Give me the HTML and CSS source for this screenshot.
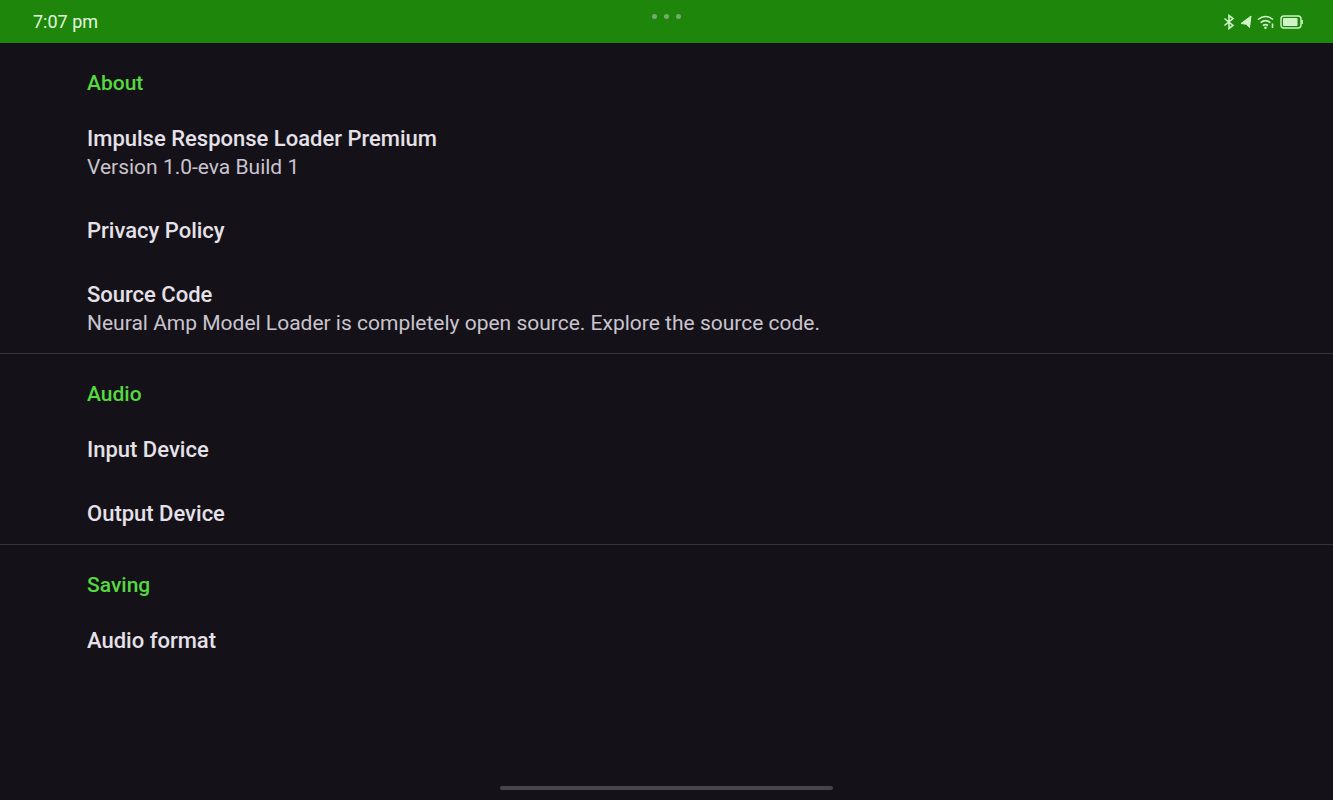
FILE: index.html
```html
<!DOCTYPE html>
<html lang="en">
<head>
  <meta charset="UTF-8" />
  <meta name="viewport" content="width=device-width, initial-scale=1.0"/>
  <title>Settings</title>
  <link rel="stylesheet" href="styles.css">
</head>
<body>
  <header class="status-bar">
    <time class="clock">7:07 pm</time>
    <div class="dots"><span></span><span></span><span></span></div>
    <div class="status-icons">
      <svg width="12" height="16" viewBox="0 0 12 16" fill="none" stroke="currentColor" stroke-width="1.6"><path d="M1.500 4.500l8.500 7L6 14.500V1.500l4 3-8.500 7"/></svg>
      <svg width="12" height="16" viewBox="0 0 12 16" fill="currentColor" stroke="currentColor" stroke-linejoin="round"><path d="M11 2L9.500 13.500 6.200 10.200 1 9.500z"/></svg>
      <svg width="18" height="16" viewBox="0 0 18 16" fill="none" stroke="currentColor" stroke-width="1.600"><path d="M1 5.500q7.500-6 15 0M3.600 8.700q4.900-4 9.800 0M6 11.500q2.500-1.800 5 0"/><circle cx="8.500" cy="13.800" r="1.300" fill="currentColor" stroke="none"/><path d="M15.500 9.500v4.500"/></svg>
      <svg width="23" height="16" viewBox="0 0 23 16" fill="none" stroke="currentColor" stroke-width="1.400"><rect x="1" y="2" width="20" height="12" rx="3"/><rect x="3" y="4" width="14.500" height="8" rx="1" fill="currentColor" stroke="none"/><path d="M22.200 6v4"/></svg>
    </div>
  </header>

  <main class="settings">
    <section class="category">
      <h2>About</h2>
      <div class="pref">
        <h3>Impulse Response Loader Premium</h3>
        <p>Version 1.0-eva Build 1</p>
      </div>
      <a class="pref" href="#privacy"><h3>Privacy Policy</h3></a>
      <a class="pref" href="#source">
        <h3>Source Code</h3>
        <p>Neural Amp Model Loader is completely open source. Explore the source code.</p>
      </a>
    </section>
    <section class="category">
      <h2>Audio</h2>
      <button class="pref" type="button">Input Device</button>
      <button class="pref" type="button">Output Device</button>
    </section>
    <section class="category">
      <h2>Saving</h2>
      <button class="pref" type="button">Audio format</button>
    </section>
  </main>

  <footer class="nav-bar"><div class="nav-handle"></div></footer>
</body>
</html>
```
FILE: styles.css
```css
* {
  box-sizing: border-box;
}
body {
  margin: 0;
  min-height: 100vh;
  display: flex;
  flex-direction: column;
  font-family: Roboto, sans-serif;
  color: #e6e1e9;
  background: #141218;
}
h2, h3, p {
  margin: 0;
}
.status-bar {
  display: grid;
  grid-template-columns: 1fr auto 1fr;
  height: 43px;
  padding: 0 30px;
  color: #e4f8df;
  background: #1e870b;
}
.clock {
  align-self: center;
  padding-left: 3px;
  font-size: 18px;
}
.dots {
  display: flex;
  gap: 7px;
  padding-top: 14px;
}
.dots span {
  width: 5px;
  height: 5px;
  border-radius: 50%;
  background: #76a873;
}
.status-icons {
  display: flex;
  align-items: center;
  justify-content: flex-end;
  gap: 5px;
  color: #cff5c7;
}
.settings {
  flex: 1;
}
.category {
  padding-top: 26px;
}
.category + .category {
  border-top: 1px solid #36343b;
}
.category h2 {
  padding: 0 87px;
  margin-bottom: 8px;
  font-size: 21px;
  font-weight: 500;
  line-height: 28px;
  color: #55d840;
}
.pref {
  display: block;
  width: 100%;
  padding: 20px 87px 16px;
  border: 0;
  background: none;
  color: inherit;
  text-align: left;
  text-decoration: none;
}
.pref h3, button.pref {
  font: 500 22px/28px Roboto, sans-serif;
}
.pref p {
  font-size: 21px;
  line-height: 28px;
  color: #cac4cf;
}
.nav-bar {
  display: flex;
  justify-content: center;
  padding-bottom: 10px;
}
.nav-handle {
  width: 25%;
  height: 4px;
  border-radius: 2px;
  background: #47454b;
}
```
